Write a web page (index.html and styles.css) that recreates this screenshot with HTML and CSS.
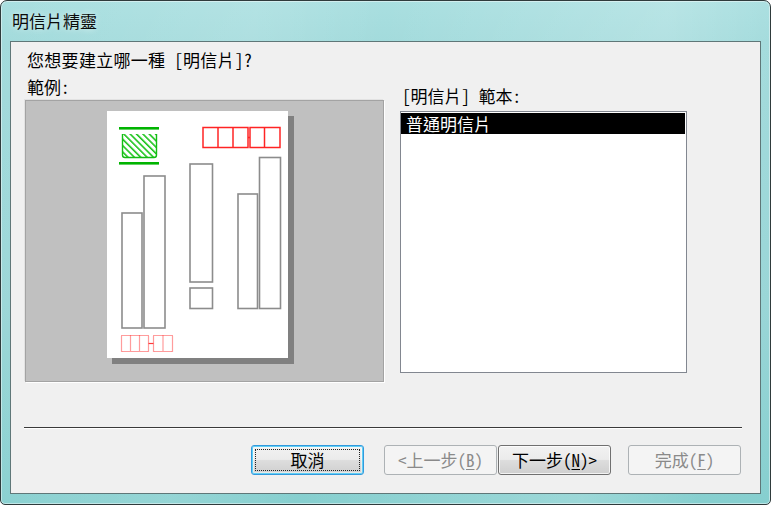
FILE: index.html
```html
<!DOCTYPE html>
<html lang="zh-Hant">
<head>
<meta charset="utf-8">
<title>明信片精靈</title>
<link rel="stylesheet" href="styles.css">
</head>
<body>
<div class="window">
  <div class="titlebar"><span class="title">明信片精靈</span></div>
  <div class="client">
    <div class="question">您想要建立哪一種 [明信片]?</div>
    <div class="columns">
      <div class="col-left">
        <div class="label">範例:</div>
        <div class="preview">
          <svg class="preview-art" width="357" height="280" viewBox="0 0 357 280" xmlns="http://www.w3.org/2000/svg">
            <defs>
              <pattern id="hatch" width="4.5" height="4.5" patternUnits="userSpaceOnUse" patternTransform="rotate(-45)">
                <rect x="0" y="0" width="1.6" height="4.5" fill="#1cc41c"/>
              </pattern>
            </defs>
            <rect x="86" y="15" width="182" height="248" fill="#808080"/>
            <rect x="81" y="10" width="181" height="247" fill="#ffffff"/>
            <rect x="93" y="26" width="40" height="2.6" fill="#00b400"/>
            <path d="M96.5 33 V54 Q96.5 56.5 99 56.5 H128 Q130.5 56.5 130.5 54 V33" fill="url(#hatch)" stroke="#12bd12" stroke-width="1.4"/>
            <rect x="93" y="61" width="40" height="2.6" fill="#00b400"/>
            <g fill="none" stroke="#ff2424" stroke-width="1.5">
              <rect x="177" y="26.5" width="45" height="20"/>
              <line x1="192" y1="26.5" x2="192" y2="46.5"/>
              <line x1="207" y1="26.5" x2="207" y2="46.5"/>
              <rect x="224" y="26.5" width="30" height="20"/>
              <line x1="238.5" y1="26.5" x2="238.5" y2="46.5"/>
              <line x1="222" y1="36.5" x2="224" y2="36.5"/>
            </g>
            <g fill="none" stroke="#8c8c8c" stroke-width="1.6">
              <rect x="96" y="112" width="20" height="115"/>
              <rect x="118" y="75" width="21" height="152"/>
              <rect x="164" y="63" width="22.5" height="118"/>
              <rect x="164" y="187" width="22.5" height="20.5"/>
              <rect x="212" y="93" width="19.5" height="114.5"/>
              <rect x="233.5" y="56.5" width="21" height="151"/>
            </g>
            <g fill="none" stroke="#ff3a3a" stroke-width="1.2" stroke-dasharray="1 1">
              <rect x="95.5" y="234.5" width="27" height="16"/>
              <line x1="104.5" y1="234.5" x2="104.5" y2="250.5"/>
              <line x1="113.5" y1="234.5" x2="113.5" y2="250.5"/>
              <rect x="127.5" y="234.5" width="19" height="16"/>
              <line x1="137" y1="234.5" x2="137" y2="250.5"/>
            </g>
            <line x1="122.5" y1="242.5" x2="127.5" y2="242.5" stroke="#ff3a3a" stroke-width="1.2"/>
          </svg>
        </div>
      </div>
      <div class="col-right">
        <div class="label label-right">[明信片] 範本:</div>
        <div class="listbox">
          <div class="item selected">普通明信片</div>
        </div>
      </div>
    </div>
    <div class="separator"></div>
    <div class="buttons">
      <button class="btn btn-focus" type="button">取消</button>
      <button class="btn btn-disabled btn-prev" type="button">&lt;上一步(<u>B</u>)</button>
      <button class="btn btn-next" type="button">下一步(<u>N</u>)&gt;</button>
      <button class="btn btn-disabled btn-finish" type="button">完成(<u>F</u>)</button>
    </div>
  </div>
</div>
</body>
</html>
```

FILE: styles.css
```css
* {
  box-sizing: border-box;
}

html, body {
  margin: 0;
  padding: 0;
  width: 771px;
  height: 505px;
  overflow: hidden;
  background: #ffffff;
}

body {
  font-family: "Noto Sans CJK TC", "Noto Sans CJK SC", sans-serif;
  font-size: 17px;
  font-weight: 400;
  font-feature-settings: "hwid" 1;
  color: #000;
}

.window {
  width: 771px;
  height: 505px;
  border: 1px solid #2f3b3c;
  border-radius: 7px 7px 5px 5px;
  padding: 0 9px 10px 9px;
  display: flex;
  flex-direction: column;
  background:
    linear-gradient(100deg, rgba(255,255,255,0) 0%, rgba(255,255,255,0.12) 30%, rgba(255,255,255,0) 45%, rgba(255,255,255,0.18) 78%, rgba(255,255,255,0) 92%),
    linear-gradient(to bottom, #a9dfe0 0%, #a3dbdc 8%, #9ad6d7 60%, #86cfcf 100%);
  box-shadow: inset 0 0 0 1px rgba(255,255,255,0.45);
}

.titlebar {
  height: 40px;
  flex: none;
  display: flex;
  align-items: center;
  padding-left: 2px;
}

.title {
  line-height: 20px;
  color: #0b0b0b;
  text-shadow: 0 0 6px rgba(255,255,255,0.7);
}

.client {
  flex: 1;
  background: #f0f0f0;
  border: 1px solid #5f7778;
  display: flex;
  flex-direction: column;
}

.question {
  margin: 8px 0 0 16px;
  line-height: 20px;
  height: 20px;
  letter-spacing: 0.3px;
}

.columns {
  display: flex;
  margin: 7px 0 0 14px;
  gap: 16px;
}

.col-left {
  width: 359px;
  display: flex;
  flex-direction: column;
}

.label {
  line-height: 20px;
  height: 20px;
  padding-left: 2px;
}

.preview {
  margin-top: 3px;
  width: 359px;
  height: 282px;
  background: #c0c0c0;
  border: 1px solid #a3a3a3;
  box-shadow: 1px 1px 0 #ffffff, -1px -1px 0 #e2e2e2;
}

.preview-art {
  display: block;
}

.col-right {
  width: 287px;
  margin-top: 9px;
  display: flex;
  flex-direction: column;
}

.listbox {
  margin-top: 5px;
  width: 287px;
  height: 262px;
  background: #ffffff;
  border: 1px solid #828790;
  padding-top: 1px;
}

.item {
  height: 21px;
  line-height: 21px;
  padding-left: 5px;
  margin-right: 1px;
}

.item.selected {
  background: #000000;
  color: #ffffff;
}

.separator {
  margin: 45px 0 0 13px;
  width: 718px;
  height: 2px;
  border-top: 1px solid #3a3a3a;
  border-bottom: 1px solid #ffffff;
}

.buttons {
  display: flex;
  margin: 16px 0 0 240px;
}

.btn {
  position: relative;
  width: 113px;
  height: 30px;
  padding: 0;
  border: 1px solid #707070;
  border-radius: 3px;
  background: linear-gradient(to bottom, #f2f2f2 0%, #ebebeb 48%, #dddddd 52%, #cfcfcf 100%);
  box-shadow: inset 0 0 0 1px rgba(255,255,255,0.75);
  font-family: inherit;
  font-size: 17px;
  font-weight: 400;
  font-feature-settings: "hwid" 1;
  line-height: 20px;
  color: #000;
  display: flex;
  align-items: center;
  justify-content: center;
}

.btn u {
  text-decoration-thickness: 1px;
  text-underline-offset: 2px;
}

.btn-focus {
  border-color: #3399dd;
  box-shadow: inset 0 0 0 1px #61d0f5, inset 0 0 0 2px rgba(255,255,255,0.5);
}

.btn-focus::after {
  content: "";
  position: absolute;
  inset: 3px;
  border: 1px dotted #222;
}

.btn-disabled {
  border-color: #adb2b5;
  background: #f4f4f4;
  color: #8a8a8a;
  box-shadow: none;
}

.btn-prev {
  margin-left: 20px;
}

.btn-next {
  margin-left: 1px;
}

.btn-finish {
  margin-left: 17px;
}
```
